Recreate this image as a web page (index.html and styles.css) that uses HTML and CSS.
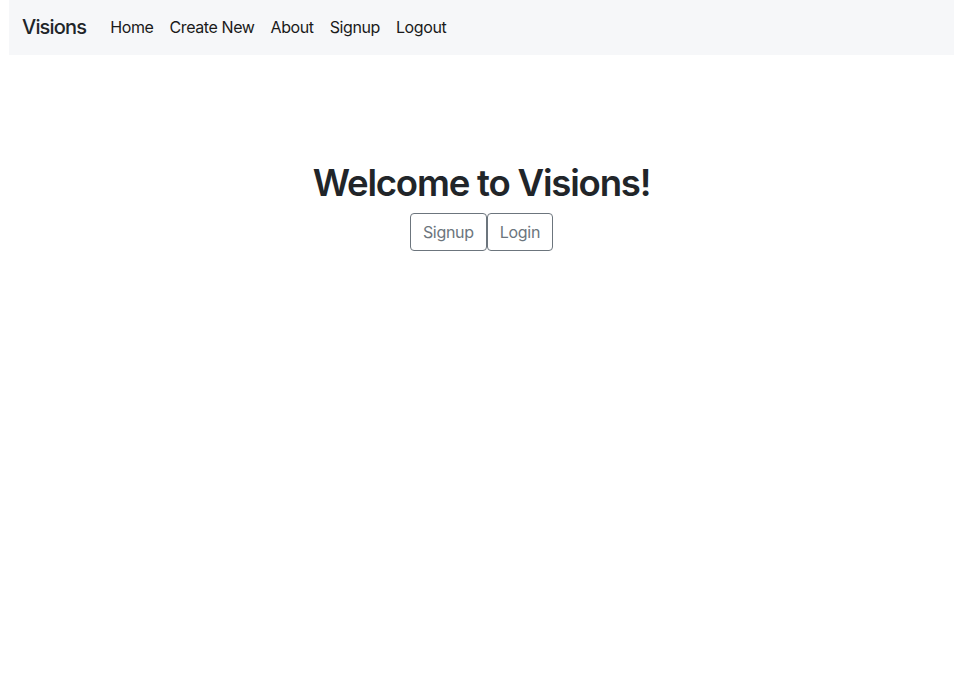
FILE: index.html
```html
<!DOCTYPE html>
<html lang="en">
<head>
<meta charset="utf-8">
<title>Visions</title>
<link rel="stylesheet" href="styles.css">
</head>
<body>
<div class="page">
  <nav class="navbar">
    <a class="brand" href="#">Visions</a>
    <ul class="nav">
      <li><a href="#">Home</a></li>
      <li><a href="#">Create New</a></li>
      <li><a href="#">About</a></li>
      <li><a href="#">Signup</a></li>
      <li><a href="#">Logout</a></li>
    </ul>
  </nav>
  <main class="hero">
    <h1>Welcome to Visions!</h1>
    <div class="actions">
      <a class="btn" href="#">Signup</a>
      <a class="btn" href="#">Login</a>
    </div>
  </main>
</div>
</body>
</html>
```
FILE: styles.css
```css
* { box-sizing: border-box; }
html, body { margin: 0; padding: 0; background: #fff; }
body {
  font-family: Inter, "Noto Sans", "Liberation Sans", sans-serif;
  color: #212529;
  font-size: 16px;
  line-height: 1.5;
}
.page { padding: 0 17px 0 9px; }
.navbar {
  display: flex;
  align-items: center;
  height: 55px;
  padding: 0 12px 2px 13px;
  background: #f6f7f9;
}
.brand {
  font-size: 20px;
  font-weight: 500;
  color: #212529;
  text-decoration: none;
  margin-right: 16px;
  letter-spacing: -0.8px;
}
.nav {
  display: flex;
  list-style: none;
  margin: 0;
  padding: 0;
}
.nav a {
  display: block;
  padding: 8px;
  color: #1a1a1a;
  text-decoration: none;
  font-size: 16px;
  letter-spacing: -0.4px;
}
.hero {
  display: flex;
  flex-direction: column;
  align-items: center;
  padding-top: 107px;
}
.hero h1 {
  margin: 0 0 7px;
  font-size: 36.6px;
  font-weight: 560;
  line-height: 1.2;
  color: #212529;
  letter-spacing: -1.2px;
}
.actions { display: flex; }
.btn {
  display: inline-block;
  padding: 6px 12px;
  border: 1px solid #6c757d;
  border-radius: 4px;
  color: #6c757d;
  text-decoration: none;
  font-size: 16px;
  line-height: 24px;
  letter-spacing: -0.3px;
}
```
